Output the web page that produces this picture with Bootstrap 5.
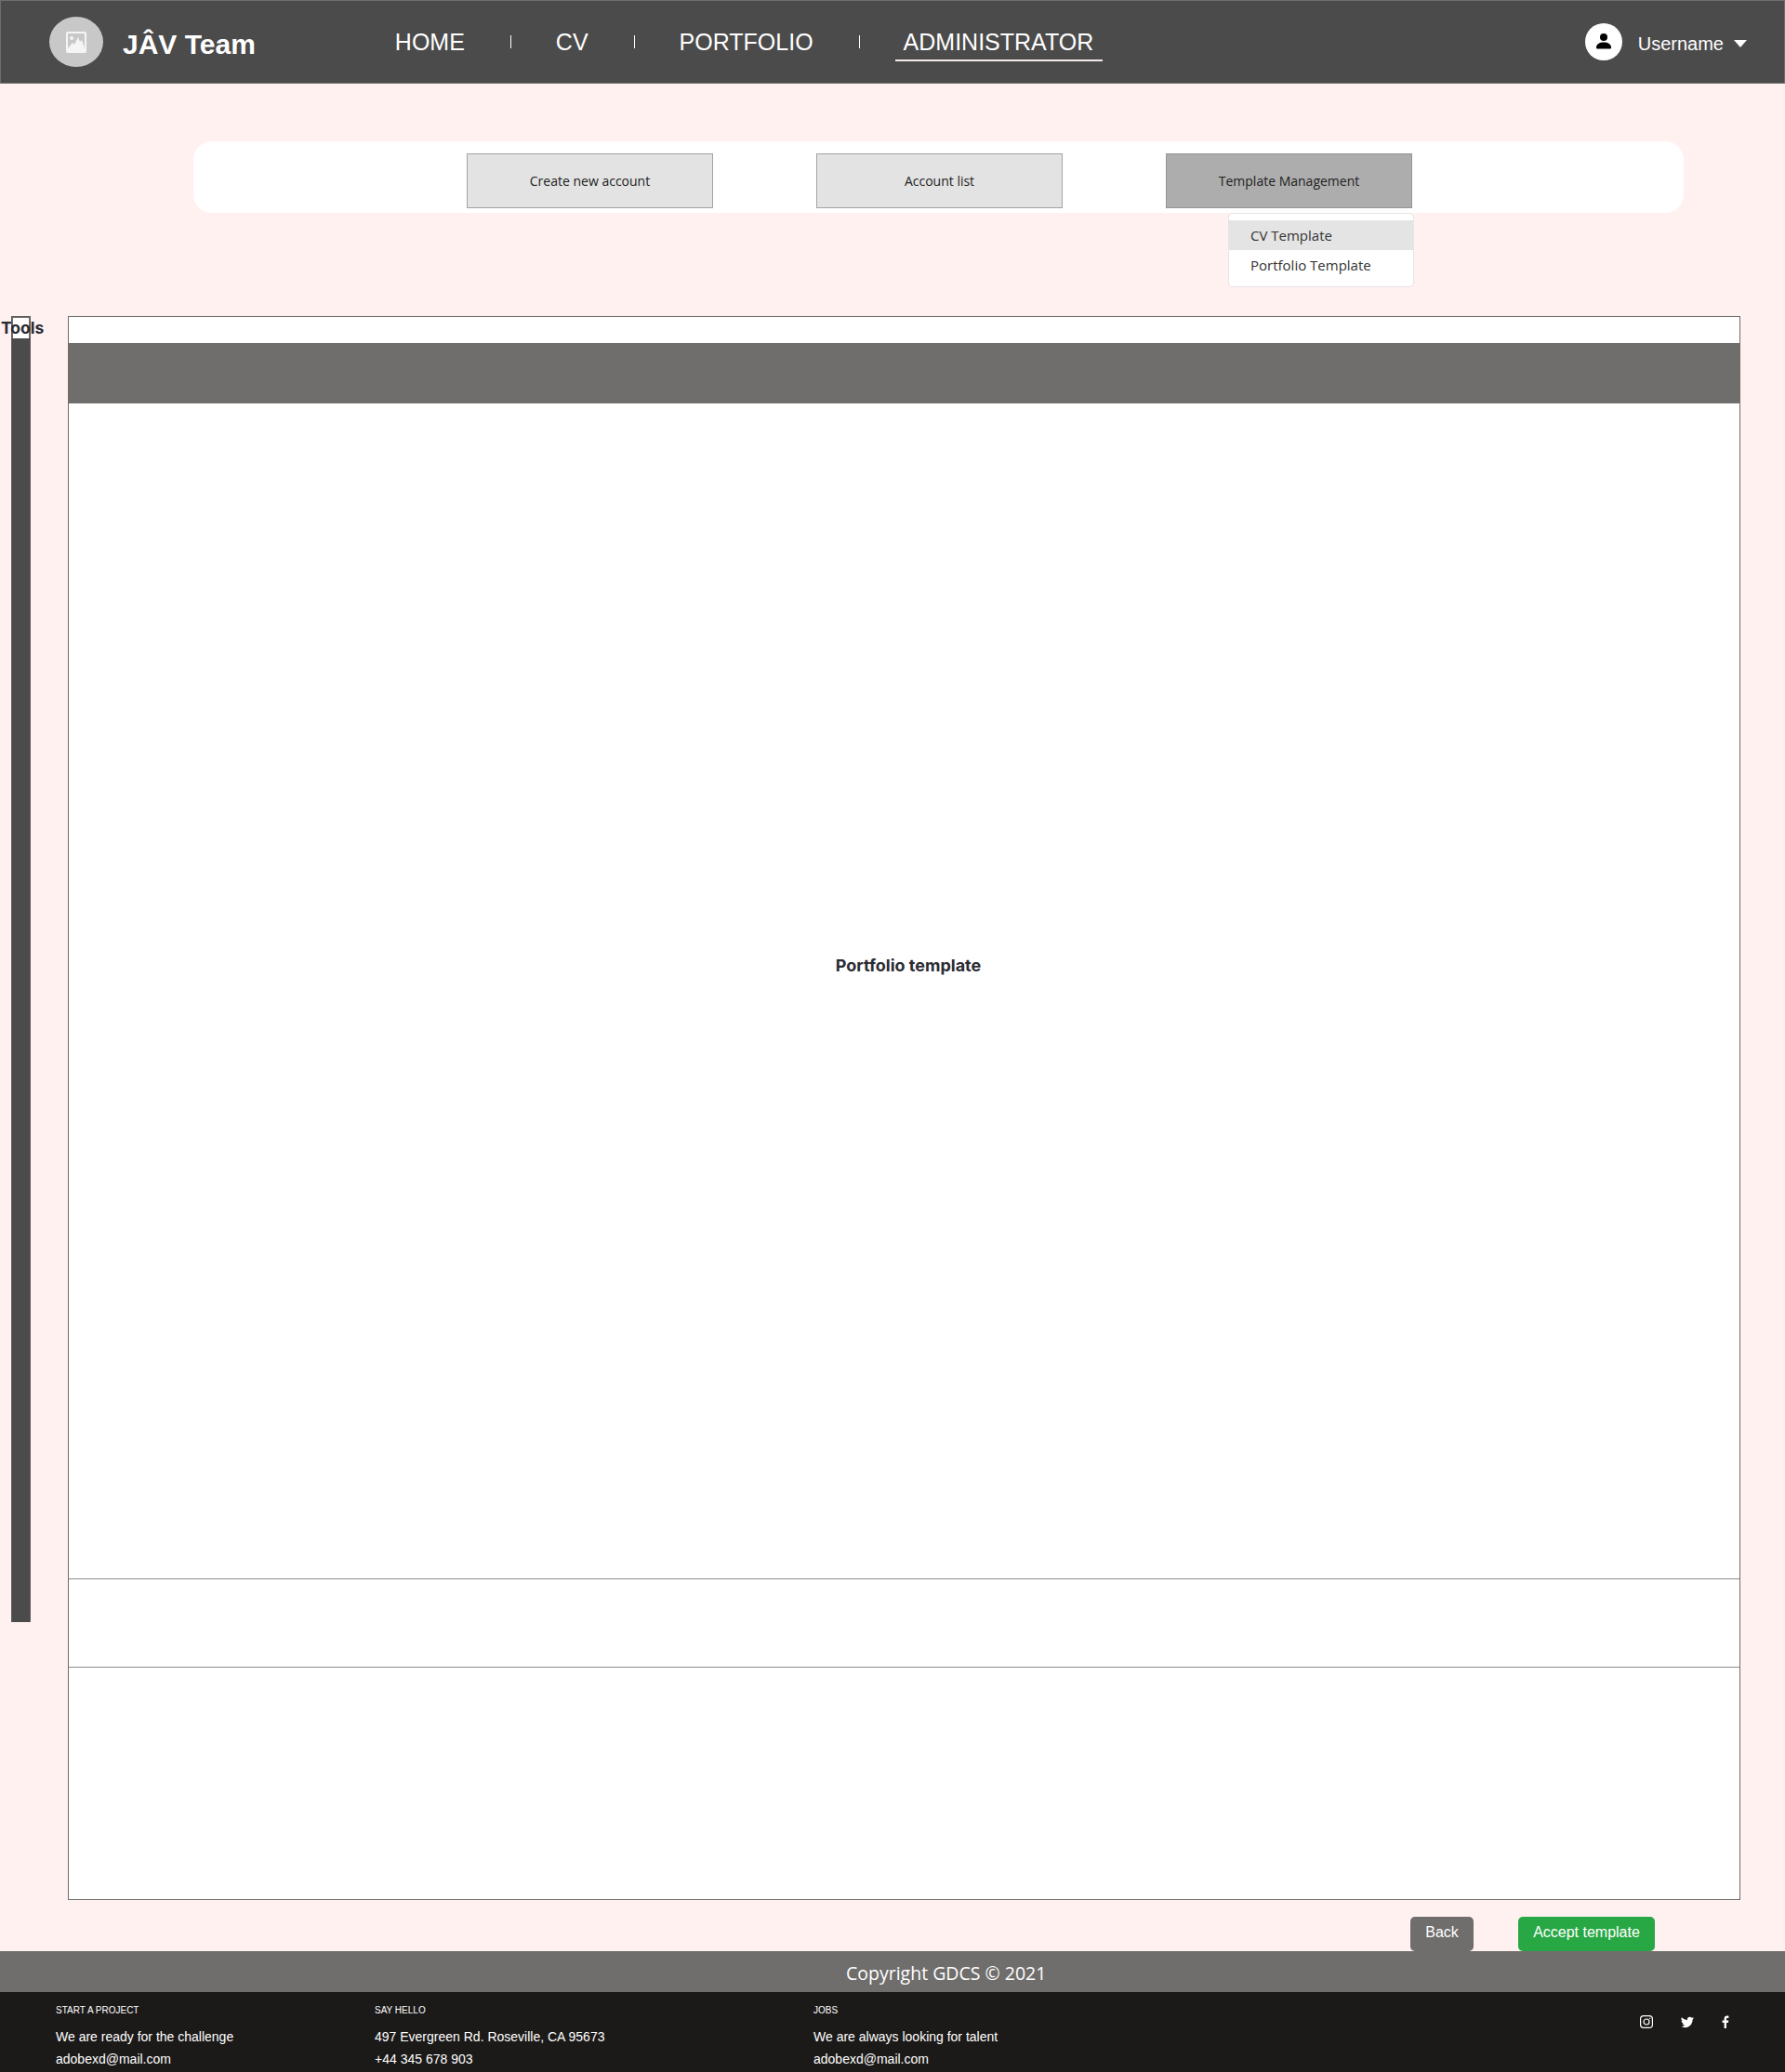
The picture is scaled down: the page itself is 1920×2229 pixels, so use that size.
<!DOCTYPE html>
<html lang="en">
<head>
    <meta charset="UTF-8">
    <meta name="viewport" content="width=device-width, initial-scale=1.0">
    <title>Portfolio template</title>
    <link rel="stylesheet" href="https://cdn.jsdelivr.net/npm/bootstrap@5.3.3/dist/css/bootstrap.min.css">
    <script src="https://cdn.jsdelivr.net/npm/bootstrap@5.3.3/dist/js/bootstrap.bundle.min.js"></script>
    <style>
        body { background: #fff1ef; font-family: "Liberation Sans", Arial, sans-serif; }

        .site-head { height: 90px; background: #4b4b4b; border: 1px solid #6f6e6c; padding: 0 40px 0 52px; }
        .logo-round { width: 58px; height: 54px; border-radius: 50%; background: #c8c8c8; }
        .brand-name { margin: 5px 0 0 21px; padding: 0; font-size: 30px; font-weight: 700; color: #fff; line-height: 1; }
        .main-links { margin: 4px 0 0 134px; }
        .main-links .nav-link { padding: 0 7px 2px; margin: 0 9px; font-size: 25px; line-height: 34px; color: #fff; border-bottom: 2px solid transparent; }
        .main-links .nav-link.current { padding: 0 10px 2px 9px; margin: 0 0 0 6px; border-bottom-color: #f0ebe8; }
        .link-sep { width: 1px; height: 14px; background: #fff; margin: 0 32px 4px 33px; }
        .user-round { width: 40px; height: 40px; border-radius: 50%; background: #fff; }
        .user-name { margin-left: 17px; font-size: 20px; color: #fff; padding: 4px 0 0; border: 0; }
        .user-name.dropdown-toggle::after { margin-left: 11px; vertical-align: 3px; border-top-width: 8px; border-left-width: 7.5px; border-right-width: 7.5px; }

        .admin-bar { width: 1603px; height: 77px; margin: 62px 0 0 208px; background: #fff; border-radius: 20px; padding: 13px 0 0 294px; gap: 111px; }
        .admin-btn { width: 265px; height: 59px; border: 1px solid #a3a3a3; border-radius: 0; background: #e3e3e3; color: #222; font-family: "Open Sans", sans-serif; font-size: 14px; padding: 0; }
        .admin-btn.open { background: #adadad; border-color: #969696; }
        .tpl-menu { position: absolute; top: 64px; left: 67px; width: 200px; min-width: 0; height: 80px; margin: 0; padding: 7px 0; font-family: "Open Sans", sans-serif; font-size: 15px; border: 1px solid #e6e6e6; border-radius: 5px; }
        .tpl-menu .dropdown-item { height: 32px; padding: 0 23px; line-height: 33px; color: #333; }
        .tpl-menu .dropdown-item.active { background: #e4e4e4; color: #333; }

        .work-row { margin: 111px 0 0 12px; }
        .tools-col { width: 21px; height: 1405px; border: 1px solid #5c5c5a; border-bottom: 0; background: #4b4b4b; margin-right: 40px; }
        .tools-name { height: 23px; background: #fff; border: 1px solid #6f6e6c; border-bottom: 0; }
        .tools-name span { display: block; margin-left: -13px; font-family: Inter, sans-serif; font-size: 17.5px; font-weight: 700; line-height: 22px; color: #2b2b33; white-space: nowrap; }
        .sheet { width: 1799px; height: 1704px; background: #fff; border: 1px solid #6f6e6c; }
        .sheet-top { height: 28px; }
        .sheet-band { height: 65px; background: #6f6e6c; margin: 0 -1px; }
        .sheet-body { height: 1264px; }
        .sheet-title { font-family: Inter, sans-serif; font-size: 18px; font-weight: 700; color: #2b2b33; margin: 0 0 56px 9px; }
        .sheet-row { height: 96px; border-top: 1px solid #8b8b8b; border-bottom: 1px solid #8b8b8b; }

        .action-row { height: 37px; margin-top: 18px; padding-right: 140px; gap: 48px; }
        .act-btn { height: 37px; font-size: 16px; line-height: 31px; border-radius: 5px; border: 0; color: #fff; padding: 0 0 4px; }
        .act-back { background: #6f6e6c; width: 68px; }
        .act-accept { background: #28a745; width: 147px; }

        .copy-band { height: 44px; background: #6f6e6c; color: #fff; font-family: "Open Sans", sans-serif; font-size: 19.5px; line-height: 47px; padding-left: 910px; }
        .site-foot { height: 86px; background: #1c1a19; color: #fff; padding: 13px 60px 0; font-size: 14px; }
        .foot-col h6 { font-size: 10px; font-weight: 400; line-height: 14px; margin: 0 0 9px; }
        .foot-col p { margin: 0; line-height: 24px; }
        .col-one { width: 343px; }
        .col-two { width: 472px; }
        .soc-icons { margin-left: auto; padding-top: 12px; gap: 30px; }
    </style>
</head>
<body>
    <header class="navbar flex-nowrap justify-content-start site-head">
        <div class="d-flex align-items-center justify-content-center logo-round">
            <svg width="22" height="23" viewBox="0 0 22 23">
                <rect width="22" height="23" rx="2" fill="#f5f5f5"/>
                <rect x="2" y="2" width="18" height="16" fill="#c8c8c8"/>
                <circle cx="6" cy="7" r="2" fill="#f5f5f5"/>
                <path d="M2 18l5-6 2 2 4-8 2 5 2-2 3 9z" fill="#f5f5f5"/>
            </svg>
        </div>
        <a class="navbar-brand brand-name" href="#">JÂV Team</a>
        <ul class="nav align-items-center main-links">
            <li class="nav-item"><a class="nav-link" href="#">HOME</a></li>
            <li class="link-sep"></li>
            <li class="nav-item"><a class="nav-link" href="#">CV</a></li>
            <li class="link-sep"></li>
            <li class="nav-item"><a class="nav-link" href="#">PORTFOLIO</a></li>
            <li class="link-sep"></li>
            <li class="nav-item"><a class="nav-link current" href="#">ADMINISTRATOR</a></li>
        </ul>
        <div class="d-flex align-items-center ms-auto">
            <div class="d-flex align-items-center justify-content-center user-round">
                <svg width="18" height="18" viewBox="0 0 18 18">
                    <circle cx="9" cy="4" r="4"/>
                    <path d="M1 15c0-3.500 3.500-5.500 8-5.500s8 2 8 5.500c0 1-.6 1.500-1.500 1.500h-13C1.600 16.500 1 16 1 15z"/>
                </svg>
            </div>
            <button class="btn dropdown-toggle user-name" type="button">Username</button>
        </div>
    </header>

    <main>
        <div class="d-flex admin-bar">
            <button class="btn admin-btn" type="button">Create new account</button>
            <button class="btn admin-btn" type="button">Account list</button>
            <div class="position-relative">
                <button class="btn admin-btn open" type="button">Template Management</button>
                <ul class="dropdown-menu d-block tpl-menu">
                    <li><a class="dropdown-item active" href="#">CV Template</a></li>
                    <li><a class="dropdown-item" href="#">Portfolio Template</a></li>
                </ul>
            </div>
        </div>

        <div class="d-flex align-items-start work-row">
            <div class="tools-col">
                <div class="tools-name"><span>Tools</span></div>
            </div>
            <section class="sheet">
                <div class="sheet-top"></div>
                <div class="sheet-band"></div>
                <div class="d-flex align-items-center justify-content-center sheet-body">
                    <p class="sheet-title">Portfolio template</p>
                </div>
                <div class="sheet-row"></div>
            </section>
        </div>

        <div class="d-flex justify-content-end action-row">
            <button class="btn act-btn act-back" type="button">Back</button>
            <button class="btn act-btn act-accept" type="button">Accept template</button>
        </div>
    </main>

    <div class="copy-band">Copyright GDCS © 2021</div>
    <footer class="d-flex site-foot">
        <div class="foot-col col-one">
            <h6>START A PROJECT</h6>
            <p>We are ready for the challenge</p>
            <p>adobexd@mail.com</p>
        </div>
        <div class="foot-col col-two">
            <h6>SAY HELLO</h6>
            <p>497 Evergreen Rd. Roseville, CA 95673</p>
            <p>+44 345 678 903</p>
        </div>
        <div class="foot-col">
            <h6>JOBS</h6>
            <p>We are always looking for talent</p>
            <p>adobexd@mail.com</p>
        </div>
        <div class="d-flex align-items-start soc-icons">
            <svg width="14" height="14" viewBox="0 0 14 14" fill="none" stroke="#fff">
                <rect x=".6" y=".6" width="12.8" height="12.8" rx="3.2" stroke-width="1.2"/>
                <circle cx="7" cy="7" r="3" stroke-width="1.2"/>
                <circle cx="10.7" cy="3.3" r=".7" fill="#fff" stroke="none"/>
            </svg>
            <svg width="14" height="14" viewBox="0 0 16 16" fill="#fff">
                <path d="M5.026 15c6.038 0 9.341-5.003 9.341-9.334 0-.14 0-.282-.006-.422A6.685 6.685 0 0 0 16 3.542a6.658 6.658 0 0 1-1.889.518 3.301 3.301 0 0 0 1.447-1.817 6.533 6.533 0 0 1-2.087.793A3.286 3.286 0 0 0 7.875 6.03a9.325 9.325 0 0 1-6.767-3.429 3.289 3.289 0 0 0 1.018 4.382A3.323 3.323 0 0 1 .64 6.575v.045a3.288 3.288 0 0 0 2.632 3.218 3.203 3.203 0 0 1-.865.115 3.23 3.23 0 0 1-.614-.057 3.283 3.283 0 0 0 3.067 2.277A6.588 6.588 0 0 1 .78 13.58a6.32 6.32 0 0 1-.78-.045A9.344 9.344 0 0 0 5.026 15z"/>
            </svg>
            <svg width="8" height="14" viewBox="4.500 0 7.800 16" fill="#fff">
                <path d="M9.500 16V9h2.300l.4-2.800H9.500V4.600c0-.8.2-1.300 1.300-1.300h1.500V.8C12 .8 11.200.7 10.300.7 8.200.7 6.800 2 6.800 4.300v1.900H4.500V9h2.300v7z"/>
            </svg>
        </div>
    </footer>
</body>
</html>
